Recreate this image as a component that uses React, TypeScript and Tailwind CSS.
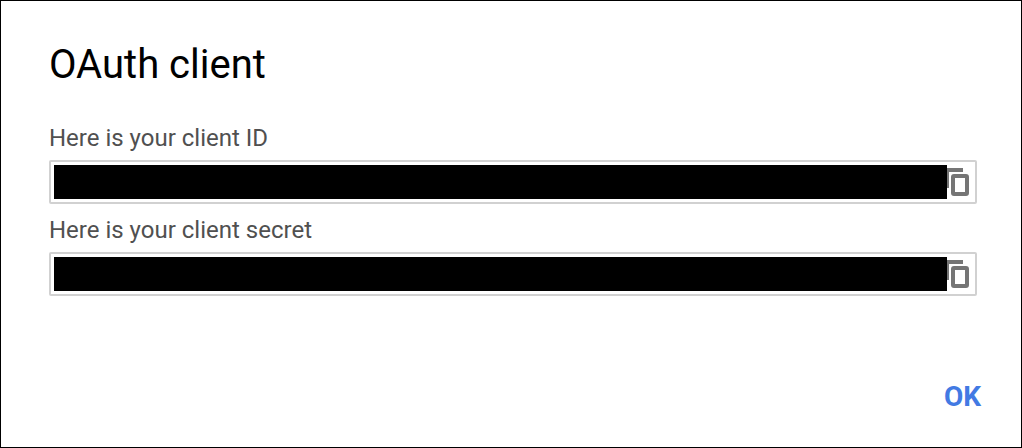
import { useId } from "react";

function CopyIcon() {
  return (
    <svg width="22" height="28" viewBox="0 0 22 28" fill="none" aria-hidden="true">
      <path d="M0 0H16V4H2V20H0Z" fill="#757575" />
      <rect x="6" y="8" width="14" height="18" rx="1" stroke="#757575" strokeWidth="4" />
    </svg>
  );
}

function SecretField({ label }: { label: string }) {
  const id = useId();
  return (
    <div>
      <label htmlFor={id} className="block pt-1 text-2xl leading-11 text-[#505050]">
        {label}
      </label>
      <div className="flex h-11 items-center rounded-xs border-2 border-[#d1d1d1] pr-1.5 pl-[3px]">
        <input
          id={id}
          type="text"
          readOnly
          className="h-[34px] min-w-0 flex-1 bg-black px-2 text-2xl text-black outline-none"
        />
        <button type="button" aria-label="Copy" className="cursor-pointer">
          <CopyIcon />
        </button>
      </div>
    </div>
  );
}

export default function App() {
  return (
    <main
      role="dialog"
      aria-labelledby="dialog-title"
      className="flex min-h-screen flex-col border border-black bg-white pt-10 pb-[26px] font-['Roboto',sans-serif]"
    >
      <h1 id="dialog-title" className="px-12 text-[40px] leading-12 text-black">
        OAuth client
      </h1>
      <div className="mt-[23px] pr-11 pl-12">
        <SecretField label="Here is your client ID" />
        <SecretField label="Here is your client secret" />
      </div>
      <div className="mt-auto flex justify-end pr-10">
        <button type="button" className="cursor-pointer text-[28px] leading-12 font-bold text-[#427ae3]">
          OK
        </button>
      </div>
    </main>
  );
}
